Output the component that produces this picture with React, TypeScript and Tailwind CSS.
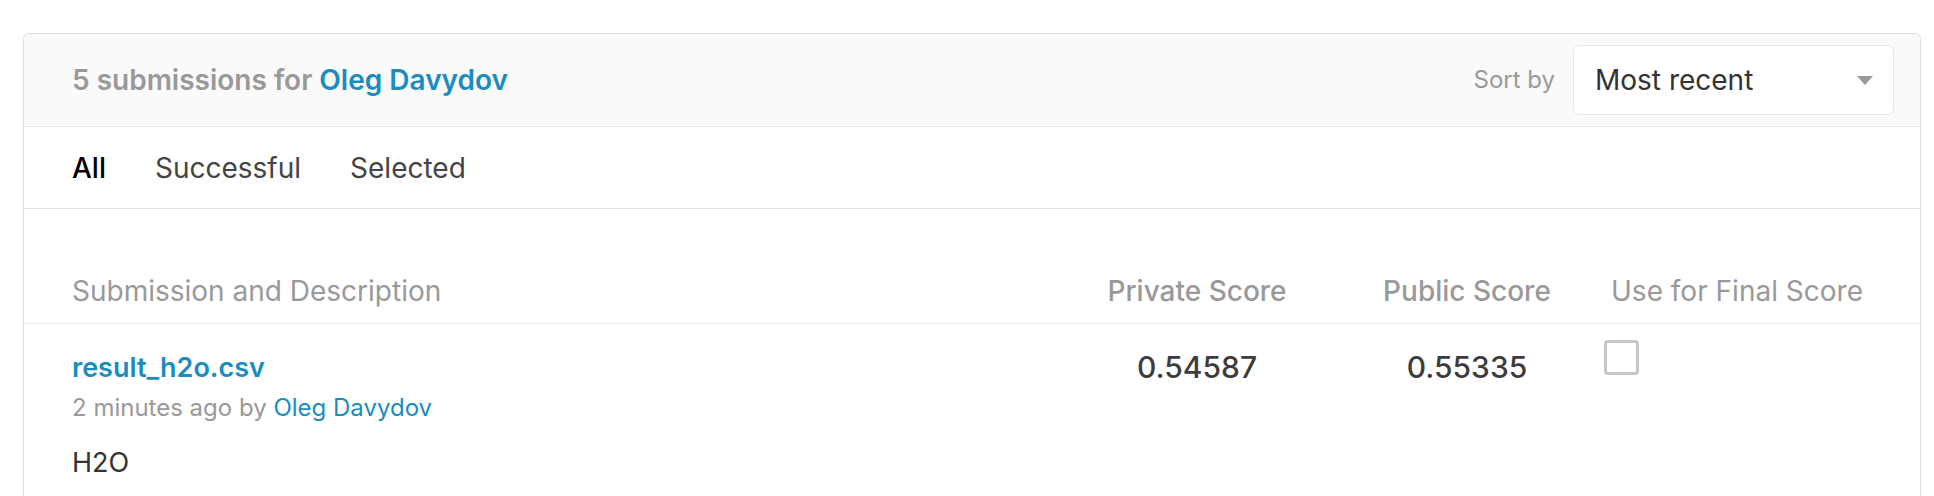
import { useState } from "react";

const BLUE = "text-[#1a8cbd]";

function Tabs() {
  const [tab, setTab] = useState("All");
  return (
    <nav className="flex h-[82px] items-center gap-[49px] border-b border-[#e0e0e0] pl-[48px]">
      {["All", "Successful", "Selected"].map((t) => (
        <button
          key={t}
          onClick={() => setTab(t)}
          className={
            tab === t
              ? "text-[28px] leading-[34px] font-medium text-black"
              : "text-[28px] leading-[34px] text-[#444]"
          }
        >
          {t}
        </button>
      ))}
    </nav>
  );
}

export default function App() {
  const [checked, setChecked] = useState(false);

  return (
    <div className="min-h-screen bg-white pl-[23px] pr-[13px] pt-[33px] font-['Inter',sans-serif]">
      <div className="rounded-t-[6px] border border-b-0 border-[#e0e0e0] pb-[60px]">
        <header className="flex h-[93px] items-center justify-between rounded-t-[6px] border-b border-[#e6e6e6] bg-[#fafafa] pl-[48px] pr-[26px]">
          <h2 className="text-[28px] leading-[34px] font-semibold text-[#999]">
            5 submissions for <a className={BLUE}>Oleg Davydov</a>
          </h2>
          <div className="flex items-center">
            <span className="mr-[18px] text-[24px] leading-[30px] text-[#999]">Sort by</span>
            <button className="flex h-[70px] w-[321px] items-center justify-between rounded-[6px] border border-[#e6e6e6] bg-white pl-[21px] pr-[20px]">
              <span className="text-[28px] leading-[34px] text-[#333]">Most recent</span>
              <svg width="16" height="9" viewBox="0 0 16 9">
                <path d="M0 0h16L8 9z" fill="#999" />
              </svg>
            </button>
          </div>
        </header>

        <Tabs />

        <div className="grid grid-cols-[1fr_270px_270px_270px] border-b border-[#ececec] pl-[48px] pr-[48px] pt-[65px] pb-[15px] text-[28px] leading-[34px] text-[#999]">
          <div>Submission and Description</div>
          <div className="text-center font-medium">Private Score</div>
          <div className="text-center font-medium">Public Score</div>
          <div className="text-center">Use for Final Score</div>
        </div>

        <div className="grid grid-cols-[1fr_270px_270px_270px] pl-[48px] pr-[48px]">
          <div className="pt-[28px]">
            <a className={`block text-[27px] leading-[32px] font-semibold ${BLUE}`}>result_h2o.csv</a>
            <div className="mt-[9px] text-[24px] leading-[30px] text-[#999]">
              2 minutes ago by <a className={BLUE}>Oleg Davydov</a>
            </div>
            <div className="mt-[24px] text-[27px] leading-[32px] text-[#333]">H2O</div>
          </div>
          <div className="pt-[25px] text-center text-[30px] leading-[36px] font-medium text-[#3c3c3c]">0.54587</div>
          <div className="pt-[25px] text-center text-[30px] leading-[36px] font-medium text-[#3c3c3c]">0.55335</div>
          <div className="pt-[16px] pl-[2px]">
            <button
              onClick={() => setChecked(!checked)}
              className="block h-[35px] w-[35px] rounded-[4px] border-[3px] border-[#c3c6cb] bg-white"
            />
          </div>
        </div>
      </div>
    </div>
  );
}
